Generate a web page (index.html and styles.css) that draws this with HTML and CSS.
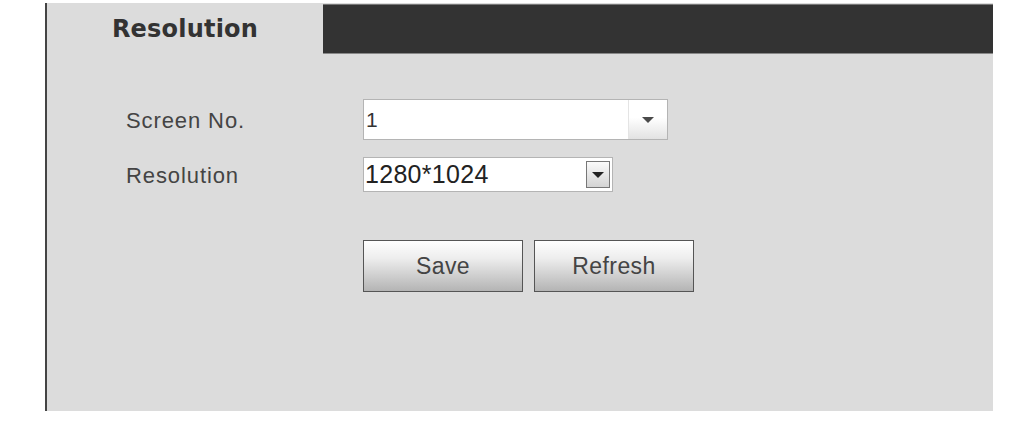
FILE: index.html
```html
<!DOCTYPE html>
<html lang="en">
  <head>
    <meta charset="UTF-8" />
    <title>Resolution</title>
    <link rel="stylesheet" href="styles.css">
  </head>
  <body>
    <div class="panel">
      <div class="header">
        <div class="tab">Resolution</div>
        <div class="bar"></div>
      </div>
      <div class="form">
        <div class="label">Screen No.</div>
        <div class="select wide">
          <span class="value">1</span>
          <span class="arrow flat"><span class="tri"></span></span>
        </div>
        <div class="label">Resolution</div>
        <div class="select narrow">
          <span class="value big">1280*1024</span>
          <span class="arrow boxed"><span class="tri"></span></span>
        </div>
        <div></div>
        <div class="buttons">
          <button class="btn">Save</button>
          <button class="btn">Refresh</button>
        </div>
      </div>
    </div>
  </body>
</html>
```

FILE: styles.css
```css
body {
  margin: 0;
  background: #fff;
  font-family: "Liberation Sans", Arial, sans-serif;
}
.panel {
  margin: 3px 0 0 45px;
  width: 946px;
  height: 408px;
  border-left: 2px solid #444;
  background: #dcdcdc;
}
.header {
  display: flex;
  height: 51px;
}
.tab {
  width: 276px;
  text-align: center;
  font-family: "DejaVu Sans", sans-serif;
  font-weight: bold;
  font-size: 24px;
  letter-spacing: 0.2px;
  color: #333;
  padding-top: 12px;
}
.bar {
  flex: 1;
  margin-top: 1px;
  background: #333;
  border-top: 1px solid #777;
  border-bottom: 1px solid #888;
}
.form {
  display: grid;
  grid-template-columns: 237px auto;
  row-gap: 17px;
  padding: 45px 0 0 79px;
  align-items: center;
}
.label {
  font-size: 22px;
  color: #444;
  letter-spacing: 0.9px;
  padding-top: 3px;
}
.select {
  display: flex;
  align-items: center;
  background: #fff;
  border: 1px solid #b4b4b4;
  box-sizing: border-box;
}
.select.wide {
  width: 305px;
  height: 41px;
}
.select.narrow {
  width: 250px;
  height: 35px;
}
.value {
  flex: 1;
  padding-left: 2px;
  font-size: 21px;
  color: #333;
}
.value.big {
  font-size: 25px;
  padding-left: 1px;
  letter-spacing: 0.3px;
  color: #222;
}
.arrow {
  display: flex;
  align-items: center;
  justify-content: center;
}
.arrow.flat {
  width: 38px;
  align-self: stretch;
  border-left: 1px solid #e4e4e4;
  background: linear-gradient(#fff 45%, #e2e2e2);
}
.arrow.boxed {
  width: 22px;
  height: 25px;
  margin-right: 2px;
  border: 1px solid #777;
  background: linear-gradient(#fafafa, #d4d4d4);
}
.tri {
  width: 0;
  height: 0;
  border-left: 6px solid transparent;
  border-right: 6px solid transparent;
  border-top: 6px solid #222;
}
.arrow.flat .tri {
  border-top-color: #4a4a4a;
}
.buttons {
  display: flex;
  gap: 11px;
  margin-top: 31px;
}
.btn {
  width: 160px;
  height: 52px;
  border: 1px solid #555;
  background: linear-gradient(#fefefe, #ededed 35%, #b4b4b4);
  font-family: "Liberation Sans", Arial, sans-serif;
  font-size: 23px;
  letter-spacing: 0.4px;
  color: #444;
  padding: 0;
}
```
